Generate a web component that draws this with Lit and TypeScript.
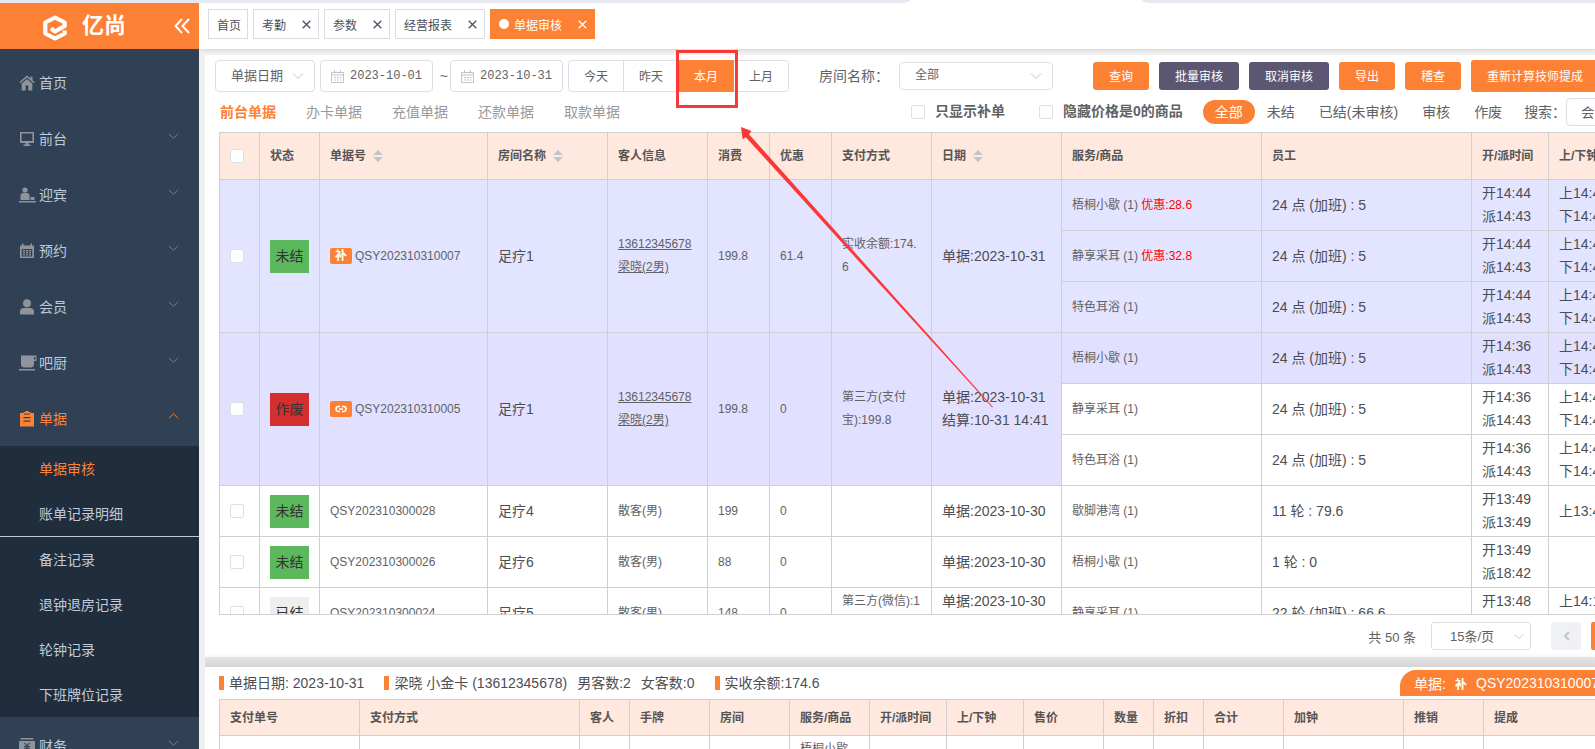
import { LitElement, html, css, svg, nothing } from "lit";
import { customElement } from "lit/decorators.js";
import { classMap } from "lit/directives/class-map.js";

const icons: Record<string, any> = {
  home: svg`<path d="M8 0.5 0.3 7.2l1 1.1L8 2.6l6.700 5.700 1-1.100-2.200-1.900V1.500h-2v2zM8 4 2.700 8.500V15.500h4v-5h2.600v5h4V8.500z"/>`,
  desk: svg`<path fill-rule="evenodd" d="M1 1h14v11H1zM2.600 2.600v7.400h10.800V2.600zM6.500 12h3v1.500h2V15h-7v-1.500h2z"/>`,
  greet: svg`<circle cx="6" cy="3" r="2.600"/><path d="M1.500 13V9q0-3 3-3h3q3 0 3 3v4zM11.500 10h4v3h-4zM0 14h17v1.600H0z"/>`,
  book: svg`<path fill-rule="evenodd" d="M1 2.500h2V.5h1.500v2h7V.5H13v2h2V15H1zM2.800 6v7.400h10.400V6zM4 7h2v1.500H4zm3 0h2v1.500H7zm3 0h2v1.500h-2zM4 9.200h2v1.300H4zm3 0h2v1.300H7zm3 0h2v1.300h-2zM4 11.300h2v1.300H4zm3 0h2v1.300H7zm3 0h2v1.300h-2z"/>`,
  user: svg`<circle cx="8" cy="4.300" r="4"/><path d="M1 15.500V13q0-4 4-4h6q4 0 4 4v2.500z"/>`,
  cup: svg`<path fill-rule="evenodd" d="M2 .5h15.500v5.500H15V9q0 3.500-3.500 3.500h-6Q2 12.500 2 9zM15 2v2.500h1.300V2zM0 14h16v1.600H0z"/>`,
  bill: svg`<path fill-rule="evenodd" d="M1 2h3.500V1h2V0h3v1h2v1H15v13.500H1zM4.500 6v1.300h7V6zm0 3.500v1.300h7V9.500zM5 3.500h6V2.500H5z"/>`,
  money: svg`<path fill-rule="evenodd" d="M1.500 0h13v1.500h-13zM0 3h16v13H0zM5 5l2.200 3H5v1.200h2.300v1H5v1.200h2.300V14h1.400v-2.600H11v-1.200H8.700v-1H11V8H8.800L11 5H9.600L8 7.300 6.400 5z"/>`,
};

const menu = [
  { icon: "home", label: "首页", leaf: true },
  { icon: "desk", label: "前台" },
  { icon: "greet", label: "迎宾" },
  { icon: "book", label: "预约" },
  { icon: "user", label: "会员" },
  { icon: "cup", label: "吧厨" },
  {
    icon: "bill",
    label: "单据",
    children: ["单据审核", "账单记录明细", "备注记录", "退钟退房记录", "轮钟记录", "下班牌位记录"],
  },
  { icon: "money", label: "财务" },
];

const pages = ["首页", "考勤", "参数", "经营报表", "单据审核"];

interface Line {
  item: string;
  off?: string;
  staff: string;
  open: string[];
  clock: string[];
}
interface Bill {
  state: string;
  tone: string;
  tag?: string;
  no: string;
  room: string;
  guest: string[];
  member?: boolean;
  cost: string;
  discount: string;
  pay: string;
  dates: string[];
  lines: Line[];
}

const bills: Bill[] = [
  {
    state: "未结", tone: "open", tag: "补", no: "QSY202310310007", room: "足疗1",
    guest: ["13612345678", "梁晓(2男)"], member: true, cost: "199.8", discount: "61.4",
    pay: "实收余额:174.6", dates: ["单据:2023-10-31"],
    lines: [
      { item: "梧桐小歇 (1)", off: "优惠:28.6", staff: "24 点 (加班) : 5", open: ["开14:44", "派14:43"], clock: ["上14:44", "下14:44"] },
      { item: "静享采耳 (1)", off: "优惠:32.8", staff: "24 点 (加班) : 5", open: ["开14:44", "派14:43"], clock: ["上14:44", "下14:44"] },
      { item: "特色耳浴 (1)", staff: "24 点 (加班) : 5", open: ["开14:44", "派14:43"], clock: ["上14:44", "下14:44"] },
    ],
  },
  {
    state: "作废", tone: "void", tag: "link", no: "QSY202310310005", room: "足疗1",
    guest: ["13612345678", "梁晓(2男)"], member: true, cost: "199.8", discount: "0",
    pay: "第三方(支付宝):199.8", dates: ["单据:2023-10-31", "结算:10-31 14:41"],
    lines: [
      { item: "梧桐小歇 (1)", staff: "24 点 (加班) : 5", open: ["开14:36", "派14:43"], clock: ["上14:44", "下14:44"] },
      { item: "静享采耳 (1)", staff: "24 点 (加班) : 5", open: ["开14:36", "派14:43"], clock: ["上14:44", "下14:44"] },
      { item: "特色耳浴 (1)", staff: "24 点 (加班) : 5", open: ["开14:36", "派14:43"], clock: ["上14:44", "下14:44"] },
    ],
  },
  {
    state: "未结", tone: "open", no: "QSY202310300028", room: "足疗4", guest: ["散客(男)"],
    cost: "199", discount: "0", pay: "", dates: ["单据:2023-10-30"],
    lines: [{ item: "歇脚港湾 (1)", staff: "11 轮 : 79.6", open: ["开13:49", "派13:49"], clock: ["上13:49"] }],
  },
  {
    state: "未结", tone: "open", no: "QSY202310300026", room: "足疗6", guest: ["散客(男)"],
    cost: "88", discount: "0", pay: "", dates: ["单据:2023-10-30"],
    lines: [{ item: "梧桐小歇 (1)", staff: "1 轮 : 0", open: ["开13:49", "派18:42"], clock: [] }],
  },
  {
    state: "已结", tone: "done", no: "QSY202310300024", room: "足疗5", guest: ["散客(男)"],
    cost: "148", discount: "0", pay: "第三方(微信):148", dates: ["单据:2023-10-30", "\u00a0"],
    lines: [{ item: "静享采耳 (1)", staff: "22 轮 (加班) : 66.6", open: ["开13:48", "\u00a0"], clock: ["上14:10", "\u00a0"] }],
  },
];

const billColumns: [string, number, boolean?][] = [
  ["", 40], ["状态", 60], ["单据号", 168, true], ["房间名称", 120, true], ["客人信息", 100],
  ["消费", 62], ["优惠", 62], ["支付方式", 100], ["日期", 130, true], ["服务/商品", 200],
  ["员工", 210], ["开/派时间", 77], ["上/下钟", 77],
];

const detailColumns: [string, number][] = [
  ["支付单号", 140], ["支付方式", 220], ["客人", 50], ["手牌", 80], ["房间", 80], ["服务/商品", 80],
  ["开/派时间", 77], ["上/下钟", 77], ["售价", 80], ["数量", 50], ["折扣", 50], ["合计", 80],
  ["加钟", 120], ["推销", 80], ["提成", 160],
];

const total = (cols: any[][]) => cols.reduce((sum, c) => sum + c[1], 0);
const chevron = svg`<path d="M1 1.500 6 6.500 11 1.500" fill="none" stroke="currentColor"/>`;
const cross = html`<svg class="cross" viewBox="0 0 9 9"><path d="M.7.7l7.600 7.600M8.300.7.7 8.300" stroke="currentColor" stroke-width="1.300"/></svg>`;
const lines = (list: string[]) => list.map((t) => html`<div>${t}</div>`);

const base = css`
  * { box-sizing: border-box; }
  button, input, select { font: inherit; color: inherit; margin: 0; }
  button { cursor: pointer; padding: 0; border: 0; background: none; white-space: nowrap; }
  a { color: inherit; text-decoration: none; }
  svg { display: block; flex: none; }
`;

@customElement("side-menu")
class SideMenu extends LitElement {
  static styles = [base, css`
    :host { display: flex; flex-direction: column; flex: none; width: 199px; overflow: hidden; background: #304156; color: #bfcbd9; font-size: 14px; }
    .brand { display: flex; align-items: center; flex: none; height: 46px; padding: 0 9px 0 42px; background: #fd8135; color: #fff; }
    .logo { width: 26px; height: 28px; margin-top: 4px; }
    .name { flex: 1; margin-left: 14px; font-size: 22px; font-weight: 700; line-height: 48px; }
    .fold { width: 16px; height: 16px; color: #fff; }
    nav { padding-top: 5px; }
    .entry { display: flex; align-items: center; height: 56px; padding: 2px 20px 0 19px; }
    .entry .glyph { width: 16px; height: 16px; fill: #909399; margin-right: 4px; overflow: visible; }
    .entry .label { flex: 1; line-height: 20px; }
    .entry .arrow { width: 11px; height: 8px; margin-bottom: 6px; color: #7e8896; }
    .entry.open, .entry.open .arrow, .sub.current { color: #fd8135; }
    .entry.open .glyph { fill: #fd8135; }
    .entry.open .arrow { transform: rotate(180deg); }
    .subs { background: #1f2d3d; }
    .sub { display: block; height: 45px; line-height: 46px; padding-left: 39px; }
    .ruled { height: 46px; border-bottom: 1px solid #bfcbd9; }
  `];
  render() {
    return html`
      <div class="brand">
        <svg class="logo" viewBox="0 0 26 28">
          <path d="M9 14.500 13 17.500 22.700 12V8.500L13 3.500 3.300 8.500V19.500L13 24.500 22.700 19.500V16.500" fill="none" stroke="#fff" stroke-width="4.200" stroke-linejoin="round"/>
          <path d="M8.500 13 13 10.500 17 12" fill="none" stroke="#fd8135" stroke-width="1.200"/>
        </svg>
        <span class="name">亿尚</span>
        <button aria-label="收起">
          <svg class="fold" viewBox="0 0 16 16"><path d="M8 1 1.500 8 8 15M15 1 8.500 8 15 15" fill="none" stroke="currentColor" stroke-width="2"/></svg>
        </button>
      </div>
      <nav>
        ${menu.map((m) => html`
          <a href="#" class=${classMap({ entry: true, open: !!m.children })}>
            <svg class="glyph" viewBox="0 0 16 16">${icons[m.icon]}</svg>
            <span class="label">${m.label}</span>
            ${m.leaf ? nothing : html`<svg class="arrow" viewBox="0 0 12 8">${chevron}</svg>`}
          </a>
          ${m.children ? html`<div class="subs">
            ${m.children.map((c, i) => html`<a href="#" class=${classMap({ sub: true, current: i === 0, ruled: i === 1 })}>${c}</a>`)}
          </div>` : nothing}
        `)}
      </nav>`;
  }
}

@customElement("filter-bar")
class FilterBar extends LitElement {
  static styles = [base, css`
    :host { display: block; padding: 5px 0 6px 10px; white-space: nowrap; }
    .row { display: flex; align-items: center; }
    .row > * { flex: none; }
    .controls { height: 32px; font-size: 12px; }
    .pick { position: relative; }
    .pick select { display: block; width: 100%; height: 100%; appearance: none; border: 1px solid #dcdfe6; border-radius: 4px; background: #fff; padding: 0 15px 2px; outline: 0; }
    .pick svg { position: absolute; right: 11px; top: 50%; width: 12px; height: 8px; margin-top: -4px; color: #c0c4cc; pointer-events: none; }
    .kind { width: 100px; height: 32px; font-size: 13px; margin-right: 5px; }
    .room { width: 154px; height: 28px; margin-right: 40px; }
    .date { display: flex; align-items: center; width: 113px; height: 32px; padding: 0 10px; gap: 6px; border: 1px solid #dcdfe6; border-radius: 4px; }
    .date svg { width: 13px; height: 13px; color: #c0c4cc; }
    .date input { width: 74px; border: 0; padding: 0; outline: 0; background: none; font-family: "Liberation Mono", monospace; font-size: 12px; }
    .tilde { width: 17px; text-align: right; padding-right: 2px; font-size: 14px; }
    .range { display: flex; height: 32px; width: 221px; margin: 0 30px 0 5px; border: 1px solid #dcdfe6; border-radius: 4px; }
    .range button { flex: 1; margin: -1px 0; padding-bottom: 2px; border-right: 1px solid #dcdfe6; }
    .range button:last-child { border: 0; }
    .range .on { background: #fd8135; color: #fff; border-color: #fd8135; }
    .caption { font-size: 14px; margin-right: 10px; padding-bottom: 2px; }
    .caption.tight { margin-right: 0; margin-left: 10px; }
    .act { height: 28px; padding: 0 16px 2px; margin-right: 10px; border-radius: 3px; background: #fd8135; color: #fff; }
    .act.dark { background: #5c5673; }
    .act.tall { height: 32px; }
    .scopes { height: 28px; margin-top: 6px; padding-left: 5px; font-size: 14px; }
    .scope { color: #999; margin-right: 30px; padding-bottom: 2px; }
    .scope.on { color: #fd8135; font-weight: 700; }
    .push { width: 261px; }
    .check { display: flex; align-items: center; gap: 10px; margin-right: 34px; font-weight: 700; color: #606266; line-height: 20px; }
    .check span { padding-bottom: 2px; }
    .check.last { margin-right: 20px; }
    .check input { appearance: none; flex: none; width: 14px; height: 14px; border: 1px solid #dcdfe6; border-radius: 2px; background: #fff; }
    .state { height: 24px; padding: 0 12px 2px; border-radius: 12px; }
    .state.on { background: #fd8135; color: #fff; }
    .search { width: 120px; height: 28px; border: 1px solid #dcdfe6; border-radius: 4px; padding: 0 14px; font-size: 13px; }
    .search::placeholder { color: #606266; }
  `];
  calendar = html`<svg viewBox="0 0 13 13"><path d="M.5 2.500h12v10H.5zM.5 5h12M3.500 0v3.500M9.500 0v3.500M3 7.500h2m1 0h2m1 0h1.500M3 10h2m1 0h2m1 0h1.500" fill="none" stroke="currentColor"/></svg>`;
  render() {
    return html`
      <div class="row controls">
        <div class="pick kind">
          <select aria-label="日期类型"><option>单据日期</option></select>
          <svg viewBox="0 0 12 8">${chevron}</svg>
        </div>
        <label class="date">${this.calendar}<input aria-label="开始日期" value="2023-10-01" /></label>
        <span class="tilde">~</span>
        <label class="date">${this.calendar}<input aria-label="结束日期" value="2023-10-31" /></label>
        <div class="range">
          ${["今天", "昨天", "本月", "上月"].map((t) => html`<button class=${t === "本月" ? "on" : ""}>${t}</button>`)}
        </div>
        <label class="caption" for="room">房间名称：</label>
        <div class="pick room">
          <select id="room"><option>全部</option></select>
          <svg viewBox="0 0 12 8">${chevron}</svg>
        </div>
        <button class="act">查询</button>
        <button class="act dark">批量审核</button>
        <button class="act dark">取消审核</button>
        <button class="act">导出</button>
        <button class="act">稽查</button>
        <button class="act tall">重新计算技师提成</button>
      </div>
      <div class="row scopes">
        ${["前台单据", "办卡单据", "充值单据", "还款单据", "取款单据"].map((t, i) => html`<button class=${classMap({ scope: true, on: i === 0 })}>${t}</button>`)}
        <span class="push"></span>
        <label class="check"><input type="checkbox" /><span>只显示补单</span></label>
        <label class="check last"><input type="checkbox" /><span>隐藏价格是0的商品</span></label>
        ${["全部", "未结", "已结(未审核)", "审核", "作废"].map((t, i) => html`<button class=${classMap({ state: true, on: i === 0 })}>${t}</button>`)}
        <label class="caption tight" for="search">搜索：</label>
        <input class="search" id="search" placeholder="会员" />
      </div>`;
  }
}

const grid = css`
  table { table-layout: fixed; border-collapse: separate; border-spacing: 0; border-left: 1px solid #d0d0d0; border-top: 1px solid #d0d0d0; }
  th, td { padding: 0 10px; border-right: 1px solid #d0d0d0; border-bottom: 1px solid #d0d0d0; text-align: left; font-weight: 400; }
  th { background: #ffe8de; font-size: 12px; font-weight: 700; color: #555; white-space: nowrap; }
`;

@customElement("bill-table")
class BillTable extends LitElement {
  static styles = [base, grid, css`
    :host { display: block; flex: 1; min-height: 0; overflow: hidden; margin-left: 14px; border-bottom: 1px solid #d0d0d0; font-size: 14px; line-height: 23px; color: #4c4e52; }
    th { height: 47px; }
    td { height: 51px; word-break: break-all; }
    .small { font-size: 12px; color: #606266; }
    .first { background: #e3e4ff; }
    .second { background: #e1e1ff; }
    .tick { display: block; appearance: none; width: 14px; height: 14px; margin: 0; border: 1px solid #dcdfe6; border-radius: 2px; background: #fff; }
    .badge { width: 39px; height: 33px; line-height: 33px; text-align: center; color: #333; }
    .open { background: #5cb85c; }
    .void { background: #d32f2f; }
    .done { background: #eee; }
    .no { display: flex; align-items: center; gap: 3px; }
    .tag { display: grid; place-items: center; width: 22px; height: 16px; border-radius: 2px; background: #fd8135; color: #fff; font-weight: 700; line-height: 16px; }
    .tag svg { width: 12px; height: 8px; }
    .member { text-decoration: underline; }
    .off { color: #f00; }
    .title { display: flex; align-items: center; gap: 7px; }
    .sort { width: 10px; height: 12px; fill: #c0c4cc; }
  `];
  row(bill: Bill, line: Line, i: number, tone: string) {
    const span = bill.lines.length;
    return html`<tr class=${tone}>
      ${i > 0 ? nothing : html`
        <td rowspan=${span}><input class="tick" type="checkbox" aria-label=${bill.no} /></td>
        <td rowspan=${span}><div class="badge ${bill.tone}">${bill.state}</div></td>
        <td rowspan=${span} class="small"><div class="no">
          ${bill.tag === "link"
            ? html`<span class="tag"><svg viewBox="0 0 12 8"><path d="M5 1.500H3.500a2.500 2.500 0 0 0 0 5H5M7 1.500h1.500a2.500 2.500 0 0 1 0 5H7M4 4h4" fill="none" stroke="#fff" stroke-width="1.600"/></svg></span>`
            : bill.tag ? html`<span class="tag">${bill.tag}</span>` : nothing}${bill.no}</div></td>
        <td rowspan=${span}>${bill.room}</td>
        <td rowspan=${span} class="small">${bill.member ? bill.guest.map((g) => html`<div><a href="#" class="member">${g}</a></div>`) : bill.guest}</td>
        <td rowspan=${span} class="small">${bill.cost}</td>
        <td rowspan=${span} class="small">${bill.discount}</td>
        <td rowspan=${span} class="small">${bill.pay}</td>
        <td rowspan=${span}>${lines(bill.dates)}</td>`}
      <td class="small">${line.item} ${line.off ? html`<span class="off">${line.off}</span>` : nothing}</td>
      <td>${line.staff}</td>
      <td>${lines(line.open)}</td>
      <td>${lines(line.clock)}</td>
    </tr>`;
  }
  render() {
    return html`<table style="width:${total(billColumns) + 1}px">
      <colgroup>${billColumns.map((c) => html`<col style="width:${c[1]}px" />`)}</colgroup>
      <thead><tr>
        ${billColumns.map(([name, , sortable]) => html`<th>
          ${name === "" ? html`<input class="tick" type="checkbox" aria-label="全选" />`
            : sortable ? html`<div class="title">${name}<svg class="sort" viewBox="0 0 10 12"><path d="M5 0l5 5H0zM5 12l5-5H0z"/></svg></div>`
            : name}</th>`)}
      </tr></thead>
      <tbody>
        ${bills.map((b, n) => b.lines.map((l, i) => this.row(b, l, i, n === 0 ? "first" : n === 1 && i === 0 ? "second" : "")))}
      </tbody>
    </table>`;
  }
}

@customElement("bill-detail")
class BillDetail extends LitElement {
  static styles = [base, grid, css`
    :host { display: block; flex: none; height: 82px; overflow: hidden; padding-left: 14px; background: #fff; font-size: 14px; color: #4c4e52; white-space: nowrap; }
    .facts { display: flex; align-items: center; height: 32px; }
    .fact { display: flex; gap: 10px; margin-right: 20px; padding-left: 5px; border-left: 5px solid #fd8135; line-height: 14px; }
    .current { display: flex; align-items: center; gap: 9px; flex: none; height: 26px; margin: 0 -16px 0 auto; padding: 0 12px 0 14px; border-top-left-radius: 16px; background: #fd8135; color: #fff; }
    .mark { font-size: 12px; font-weight: 700; }
    th { height: 36px; padding-bottom: 2px; }
    td { height: 51px; padding-top: 2px; vertical-align: top; font-size: 12px; line-height: 23px; color: #606266; }
  `];
  render() {
    return html`
      <div class="facts">
        <div class="fact">单据日期: 2023-10-31</div>
        <div class="fact"><span>梁晓 小金卡 (13612345678)</span><span>男客数:2</span><span>女客数:0</span></div>
        <div class="fact">实收余额:174.6</div>
        <div class="current"><span>单据:</span><span class="mark">补</span><span>QSY202310310007</span></div>
      </div>
      <table style="width:${total(detailColumns) + 1}px">
        <colgroup>${detailColumns.map((c) => html`<col style="width:${c[1]}px" />`)}</colgroup>
        <thead><tr>${detailColumns.map((c) => html`<th>${c[0]}</th>`)}</tr></thead>
        <tbody><tr>${detailColumns.map((c) => html`<td>${c[0] === "服务/商品" ? "梧桐小歇" : ""}</td>`)}</tr></tbody>
      </table>`;
  }
}

@customElement("app-root")
class AppRoot extends LitElement {
  static styles = [base, css`
    :host { position: relative; display: flex; flex-direction: column; height: 100vh; overflow: hidden; background: #fff; color: #606266; font-family: "Liberation Sans", "Noto Sans CJK SC", sans-serif; font-size: 14px; }
    .strip { display: flex; flex: none; height: 3px; gap: 232px; }
    .strip i { flex: 910; background: #e7e8f0; border-bottom-right-radius: 8px 3px; }
    .strip i + i { flex: 453; border-radius: 0 0 0 8px / 0 0 0 3px; }
    .frame { display: flex; flex: 1; min-height: 0; }
    .main { display: flex; flex-direction: column; flex: 1; min-width: 0; overflow: hidden; background: #f0f0f0; }
    .tabs { display: flex; flex: none; align-items: center; gap: 5px; height: 46px; padding: 0 9px 4px; background: #fff; box-shadow: 0 1px 4px #d4d4d4; font-size: 12px; }
    .tab { display: flex; align-items: center; height: 30px; padding: 0 7px 0 8px; border: 1px solid #d8dce5; color: #495060; }
    .tab.home { padding-right: 6px; }
    .tab.on { background: #fd8135; border-color: #fd8135; color: #fff; }
    .tab.on::before { content: ""; width: 10px; height: 10px; margin-right: 5px; border-radius: 50%; background: #fff; }
    .cross { width: 9px; height: 9px; margin-left: 16px; }
    .sheet { display: flex; flex-direction: column; flex: 1; min-height: 0; min-width: 0; margin: 6px 0 0 6px; overflow: hidden; background: #fff; }
    .pager { display: flex; flex: none; justify-content: flex-end; align-items: center; height: 42px; margin-right: -16px; font-size: 13px; }
    .size { position: relative; width: 100px; height: 28px; margin: 0 20px 0 15px; }
    .size select { width: 100%; height: 100%; appearance: none; border: 1px solid #dcdfe6; border-radius: 3px; padding: 0 18px; background: #fff; }
    .size svg { position: absolute; right: 7px; top: 11px; width: 10px; height: 7px; color: #c0c4cc; pointer-events: none; }
    .page { display: grid; place-items: center; width: 30px; height: 28px; border-radius: 2px; background: #f0f1f4; color: #c0c4cc; }
    .page.on { width: 20px; margin-left: 10px; background: #fd8135; }
    .page svg { width: 7px; height: 10px; }
    .split { flex: none; height: 10px; background: linear-gradient(#e5e5e5, #d5d5d5); box-shadow: 0 0 6px #eee; }
    .note { position: absolute; left: 0; top: 0; width: 1000px; height: 420px; pointer-events: none; }
  `];
  render() {
    return html`
      <div class="strip"><i></i><i></i></div>
      <div class="frame">
        <side-menu></side-menu>
        <div class="main">
          <div class="tabs">
            ${pages.map((p, i) => html`<a href="#" class=${classMap({ tab: true, home: i === 0, on: i === 4 })}>${p}${i ? cross : nothing}</a>`)}
          </div>
          <div class="sheet">
            <filter-bar></filter-bar>
            <bill-table></bill-table>
            <div class="pager">
              <span>共 50 条</span>
              <div class="size">
                <select aria-label="每页条数"><option>15条/页</option></select>
                <svg viewBox="0 0 12 8">${chevron}</svg>
              </div>
              <button class="page" aria-label="上一页"><svg viewBox="0 0 7 10"><path d="M6 1 2 5l4 4" fill="none" stroke="currentColor" stroke-width="1.800"/></svg></button>
              <button class="page on" aria-label="第一页"></button>
            </div>
            <div class="split"></div>
            <bill-detail></bill-detail>
          </div>
        </div>
      </div>
      <svg class="note" viewBox="0 0 1000 420">
        <rect x="677.500" y="51.500" width="59" height="55" fill="none" stroke="#fb3838" stroke-width="3"/>
        <path d="M741 127l10.500 4-2.500 3.200L993 407l-.8.6L745.800 137.200l-3.200 2z" fill="#fb3838"/>
      </svg>`;
  }
}
